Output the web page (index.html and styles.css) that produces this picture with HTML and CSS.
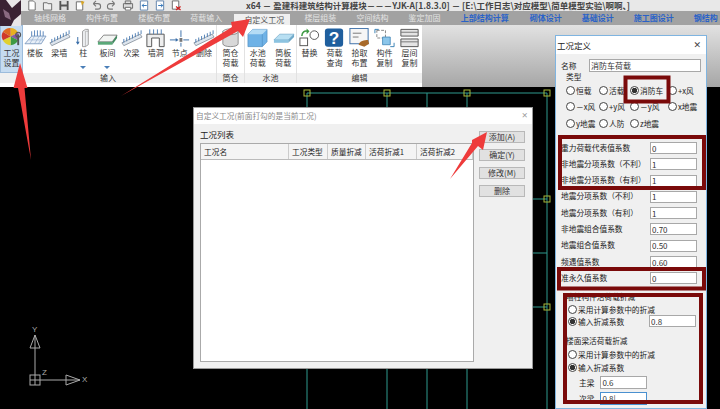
FILE: index.html
```html
<!DOCTYPE html>
<html lang="zh-CN">
<head>
    <meta charset="UTF-8">
    <title>工况定义</title>
    <link rel="stylesheet" href="styles.css">
</head>
<body>
<svg class="defs" width="0" height="0">
    <symbol id="pins" viewBox="0 0 24 20">
        <path d="M2 15 L21 6 L23 9 L4 18 Z" fill="#dfe6ee" stroke="#7d8894" stroke-width=".8"/>
        <path d="M4 11v4M7 9.5v4M10 8v4M13 6.5v4M16 5v4M19 3.500v4M22 2v4" stroke="#4f7fb5" stroke-width="1"/>
    </symbol>
</svg>

<div class="app">
    <svg class="logo" viewBox="0 0 21 26">
        <rect width="21" height="26" fill="#e9e6e8"/>
        <path d="M0 0h6l6 8 9-8v14l-7 6-3 6H0z" fill="#3a2233"/>
        <path d="M3 9l6 4 2 7-6-3z" fill="#8a6a80"/>
    </svg>

    <div class="titlebar">
        <div class="quick">
            <svg viewBox="0 0 12 12"><path d="M2.500 1h5l2 2v8h-7z" fill="#fff" stroke="#666"/></svg>
            <svg viewBox="0 0 12 12"><path d="M1 3h4l1 1h4v7H1z" fill="#eee" stroke="#666"/></svg>
            <svg viewBox="0 0 12 12"><path d="M1 1h10v10H1z" fill="#555"/><path d="M3 1h6v4H3zM3 7h6v4H3z" fill="#ddd"/></svg>
            <svg viewBox="0 0 12 12"><path d="M2 2h7v9H2z" fill="#fff" stroke="#666"/><path d="M7 1l4 1-3 4z" fill="#d9a520"/></svg>
            <svg viewBox="0 0 12 12"><path d="M3 4h5a3 3 0 0 1 0 6H5M3 4l3-3M3 4l3 3" fill="none" stroke="#777" stroke-width="1.200"/></svg>
            <svg viewBox="0 0 12 12"><path d="M9 4H4a3 3 0 0 0 0 6h3M9 4L6 1M9 4L6 7" fill="none" stroke="#777" stroke-width="1.200"/></svg>
            <svg viewBox="0 0 12 12"><path d="M3 1h6v3H3zM1 4h10v5H1z" fill="#ddd" stroke="#666"/><path d="M3 8h6v3H3z" fill="#fff" stroke="#666"/></svg>
            <svg viewBox="0 0 12 12"><path d="M2 1h8v10H2z" fill="#fff" stroke="#5b7fa8"/><path d="M9 6H4M6 4L4 6l2 2" fill="none" stroke="#2a6fb5"/></svg>
            <svg viewBox="0 0 12 12"><path d="M2 1h8v10H2z" fill="#fff" stroke="#5b7fa8"/><path d="M4 6h5M7 4l2 2-2 2" fill="none" stroke="#2a6fb5"/></svg>
            <svg viewBox="0 0 12 12"><path d="M2 1h7v9H2z" fill="#fff" stroke="#666"/><path d="M6 7l5 4M11 7l-5 4" stroke="#d02020" stroke-width="1.400"/></svg>
        </div>
        <div class="app-title">x64 － 盈建科建筑结构计算模块－－－YJK-A[1.8.3.0] － [E:\工作日志\对应模型\简单模型实验\啊啊、]</div>
    </div>

    <div class="tabs">
        <span class="tab">轴线网格</span>
        <span class="tab">构件布置</span>
        <span class="tab">楼板布置</span>
        <span class="tab">荷载输入</span>
        <span class="tab active">自定义工况</span>
        <span class="tab">楼层组装</span>
        <span class="tab">空间结构</span>
        <span class="tab">鉴定加固</span>
        <span class="tab calc tab-long">上部结构计算</span>
        <span class="tab calc">砌体设计</span>
        <span class="tab calc">基础设计</span>
        <span class="tab calc tab-mid">施工图设计</span>
        <span class="tab calc">钢结构</span>
    </div>

    <div class="ribbon">
        <div class="group group-input">
            <div class="items">
                <div class="item first">
                    <svg viewBox="0 0 22 22">
                        <path d="M10 10V1a9 9 0 0 1 8 5z" fill="#e8b020"/>
                        <path d="M10 10l8-4a9 9 0 0 1 0 8z" fill="#8a5aa8"/>
                        <path d="M10 10l8 4a9 9 0 0 1-8 5z" fill="#3f9a45"/>
                        <path d="M10 10v9a9 9 0 0 1-8-5z" fill="#e0d030"/>
                        <path d="M10 10l-8 4a9 9 0 0 1 0-9z" fill="#d03828"/>
                        <path d="M10 10L2 5a9 9 0 0 1 8-4z" fill="#e06820"/>
                        <path d="M18 8v11" stroke="#555" stroke-width="2"/>
                        <circle cx="18" cy="8" r="2.500" fill="none" stroke="#555" stroke-width="1.200"/>
                    </svg>
                    <span>工况<br>设置</span>
                </div>
                <div class="item">
                    <svg viewBox="0 0 24 20">
                        <path d="M1 16L8 8h15l-5 8z" fill="#e8eff7" stroke="#6d8fb8" stroke-width=".8"/>
                        <path d="M6 16l5-8M11 16l5-8M15 16l5-8M5 12h16" stroke="#8aa6c8" stroke-width=".6"/>
                        <path d="M8 8V3M11 8V2M14 8V2M17 8V2M20 8V3" stroke="#5a86bb"/>
                    </svg>
                    <span>楼板</span>
                </div>
                <div class="item"><svg viewBox="0 0 24 20"><use href="#pins"/></svg><span>梁墙</span></div>
                <div class="item">
                    <svg viewBox="0 0 24 20">
                        <path d="M11 3l3-2h3v16l-3 2h-3z" fill="#eef0f2" stroke="#888" stroke-width=".8"/>
                        <path d="M14 3h3M14 3v16" stroke="#999" stroke-width=".6"/>
                        <path d="M6 9v7" stroke="#3a6ea8"/><path d="M4 14h4l-2 3z" fill="#3a6ea8"/>
                    </svg>
                    <span>柱</span>
                    <i class="drop"></i>
                </div>
                <div class="item">
                    <svg viewBox="0 0 24 20">
                        <path d="M2 14l6-7h14l-5 7z" fill="#f3f5f3" stroke="#666" stroke-width=".8"/>
                        <path d="M2 14h15v3H2z" fill="#5aa878"/><path d="M17 14l5-7v3l-5 7z" fill="#3f8a5f"/>
                    </svg>
                    <span>板间</span>
                    <i class="drop"></i>
                </div>
                <div class="item"><svg viewBox="0 0 24 20"><use href="#pins"/></svg><span>次梁</span></div>
                <div class="item">
                    <svg viewBox="0 0 24 20">
                        <path d="M3 6h18v13h-5V10H8v9H3z" fill="#eee" stroke="#555"/>
                        <path d="M6 6V1M10 6V1M14 6V1M18 6V1" stroke="#4f7fb5"/>
                    </svg>
                    <span>墙洞</span>
                </div>
                <div class="item">
                    <svg viewBox="0 0 24 20">
                        <path d="M2 12h7" stroke="#3a6ea8"/><path d="M8 10l3 2-3 2z" fill="#3a6ea8"/>
                        <rect x="12" y="10" width="3" height="4" fill="#777"/>
                        <path d="M13.500 2v7M13.500 15v4M16 12h6" stroke="#3a6ea8"/>
                    </svg>
                    <span>节点</span>
                </div>
                <div class="item"><svg viewBox="0 0 24 20"><use href="#pins"/></svg><span>删除</span></div>
            </div>
            <div class="group-name">输入</div>
        </div>

        <div class="group group-silo">
            <div class="items">
                <div class="item">
                    <svg viewBox="0 0 24 20">
                        <path d="M4 3v13c0 4 16 4 16 0V3z" fill="#d8d8d8" stroke="#777" stroke-width=".8"/>
                        <ellipse cx="12" cy="3.500" rx="8" ry="3" fill="#f2f2f2" stroke="#777" stroke-width=".8"/>
                    </svg>
                    <span>筒仓<br>荷载</span>
                </div>
            </div>
            <div class="group-name">筒仓</div>
        </div>

        <div class="group group-tank">
            <div class="items">
                <div class="item">
                    <svg viewBox="0 0 24 20">
                        <path d="M2 6l5-5h15v13l-5 5H2z" fill="#6fb2e6" stroke="#4a88bb" stroke-width=".6"/>
                        <path d="M2 6l5-5h15l-5 5z" fill="#b5dcf5"/>
                        <path d="M17 6v13" stroke="#4a88bb" stroke-width=".6"/>
                    </svg>
                    <span>水池<br>荷载</span>
                </div>
                <div class="item">
                    <svg viewBox="0 0 24 20">
                        <path d="M2 12l6-6h15l-6 6z" fill="#b8dff2" stroke="#5c9cc0" stroke-width=".6"/>
                        <path d="M2 12h15v3H2z" fill="#8cc3e0"/><path d="M17 12l6-6v3l-6 6z" fill="#6ea8c8"/>
                    </svg>
                    <span>筒板<br>荷载</span>
                </div>
            </div>
            <div class="group-name">水池</div>
        </div>

        <div class="group group-edit">
            <div class="items">
                <div class="item">
                    <svg viewBox="0 0 24 20">
                        <rect x="2" y="10" width="8" height="8" fill="#fff" stroke="#555"/>
                        <circle cx="17" cy="7" r="4.500" fill="#fff" stroke="#555"/>
                        <path d="M4 8c0-4 3-6 6-5" fill="none" stroke="#3f9a45" stroke-width="1.600"/>
                        <path d="M9 0l3 3-3 3z" fill="#3f9a45"/>
                    </svg>
                    <span>替换</span>
                </div>
                <div class="item">
                    <svg viewBox="0 0 24 20">
                        <rect x="2" y="0" width="19" height="19" rx="3" fill="#1f5f9e"/>
                        <text x="11.500" y="16" class="help">?</text>
                    </svg>
                    <span>荷载<br>查询</span>
                </div>
                <div class="item">
                    <svg viewBox="0 0 24 20">
                        <rect x="2" y="0" width="19" height="16" fill="#f6f6f6" stroke="#3a6ea8"/>
                        <path d="M5 5h9M5 9h6" stroke="#777"/>
                        <path d="M11 17c1-4 6-5 10-5l1 4-5 3z" fill="#a86a2a"/>
                    </svg>
                    <span>拾取<br>布置</span>
                </div>
                <div class="item">
                    <svg viewBox="0 0 24 20">
                        <path d="M4 2h9v8H4z" fill="#fff" stroke="#666" stroke-width=".8" stroke-dasharray="3 1.500"/>
                        <path d="M10 9h8v8h-8z" fill="#8cc6ea" stroke="#3a82b5" stroke-width=".8"/>
                        <path d="M2 5V1h4M22 15v4h-4" fill="none" stroke="#3a82b5"/>
                    </svg>
                    <span>构件<br>复制</span>
                </div>
                <div class="item">
                    <svg viewBox="0 0 24 20">
                        <path d="M3 1h18v7H3zM3 11h18v8H3z" fill="#e4e4e4" stroke="#555"/>
                        <path d="M3 4h18M3 14h18" stroke="#777"/>
                    </svg>
                    <span>层间<br>复制</span>
                </div>
            </div>
            <div class="group-name">编辑</div>
        </div>

        <div class="ribbon-rest"></div>
    </div>

    <div class="canvas">
        <svg class="grid" viewBox="0 0 720 322">
            <path d="M307 6H547M307 6V30M387 6V30M427 6V30M467 6V30M307 282V322M387 282V322M427 282V322M467 282V322M547 6V322M532 112H547M532 166H547M532 220H547"/>
            <g class="node">
                <rect x="304" y="3" width="6" height="6"/>
                <rect x="384" y="3" width="6" height="6"/>
                <rect x="464" y="3" width="6" height="6"/>
                <rect x="544" y="3" width="6" height="6"/>
                <rect x="544" y="109" width="6" height="6"/>
                <rect x="544" y="217" width="6" height="6"/>
            </g>
        </svg>
        <svg class="axis" viewBox="0 0 100 70">
            <rect x="5" y="41" width="10" height="10"/>
            <path d="M5 46H15M10 41V51M10 41V14M15 46H41"/>
            <path d="M10 1L5 14H15ZM10 1V14"/>
            <path d="M55 46L41 41V51ZM41 46H55"/>
            <text x="7" y="-2">Y</text>
            <text x="17" y="41">Z</text>
            <text x="57" y="48">X</text>
        </svg>
    </div>

    <div class="window cases">
        <div class="window-title">
            <span>自定义工况(前面打勾的是当前工况)</span>
            <span class="close">✕</span>
        </div>
        <div class="cases-body">
            <div class="cases-main">
                <div class="list-name">工况列表</div>
                <div class="list">
                    <div class="list-head">
                        <span class="col-name">工况名</span>
                        <span class="col-type">工况类型</span>
                        <span class="col-mass">质量折减</span>
                        <span class="col-live">活荷折减1</span>
                        <span class="col-live2">活荷折减2</span>
                    </div>
                </div>
            </div>
            <div class="cases-buttons">
                <button>添加(A)</button>
                <button>确定(Y)</button>
                <button>修改(M)</button>
                <button>删除</button>
            </div>
        </div>
    </div>

    <div class="window define">
        <div class="window-title">
            <span>工况定义</span>
            <span class="close">✕</span>
        </div>
        <div class="define-body">
            <div class="name-row">
                <label>名称</label>
                <input type="text" value="消防车荷载">
            </div>
            <div class="type-label">类型</div>
            <div class="types">
                <label><input type="radio" name="type">恒载</label>
                <label><input type="radio" name="type">活载</label>
                <label><input type="radio" name="type" checked>消防车</label>
                <label><input type="radio" name="type">+x风</label>
                <label><input type="radio" name="type">－x风</label>
                <label><input type="radio" name="type">+y风</label>
                <label><input type="radio" name="type">－y风</label>
                <label><input type="radio" name="type">x地震</label>
                <label><input type="radio" name="type">y地震</label>
                <label><input type="radio" name="type">人防</label>
                <label><input type="radio" name="type">z地震</label>
            </div>
            <div class="factors">
                <div class="factor"><label>重力荷载代表值系数</label><input type="text" value="0"></div>
                <div class="factor"><label>非地震分项系数（不利）</label><input type="text" value="1"></div>
                <div class="factor"><label>非地震分项系数（有利）</label><input type="text" value="1"></div>
                <div class="factor"><label>地震分项系数（不利）</label><input type="text" value="1"></div>
                <div class="factor"><label>地震分项系数（有利）</label><input type="text" value="1"></div>
                <div class="factor"><label>非地震组合值系数</label><input type="text" value="0.70"></div>
                <div class="factor"><label>地震组合值系数</label><input type="text" value="0.50"></div>
                <div class="factor"><label>频遇值系数</label><input type="text" value="0.60"></div>
                <div class="factor"><label>准永久值系数</label><input type="text" value="0"></div>
            </div>
            <div class="reduce">
                <div class="reduce-name">墙柱构件活荷载折减</div>
                <label class="pick"><input type="radio" name="wall">采用计算参数中的折减</label>
                <label class="pick"><input type="radio" name="wall" checked>输入折减系数<input type="text" class="reduce-value" value="0.8"></label>
            </div>
            <div class="reduce beam">
                <div class="reduce-name">楼面梁活荷载折减</div>
                <label class="pick"><input type="radio" name="beam">采用计算参数中的折减</label>
                <label class="pick"><input type="radio" name="beam" checked>输入折减系数</label>
                <div class="beam-row"><label>主梁</label><input type="text" value="0.6"></div>
                <div class="beam-row"><label>次梁</label><input type="text" class="focused" value="0.8|"></div>
            </div>
        </div>
    </div>

    <svg class="notes" viewBox="0 0 720 409">
        <rect class="mark" x="625.500" y="77.500" width="43" height="24"/>
        <rect class="mark" x="560" y="137" width="144" height="51"/>
        <rect class="mark" x="559" y="269" width="145" height="19.500"/>
        <rect class="mark" x="565" y="295" width="136" height="107"/>
        <path class="arrow" d="M20 63L27.500 88H24.500L31 160L18 88H13.500Z"/>
        <path class="arrow" d="M250 19L243 37L238 31L121 96L232 27L231 22Z"/>
        <path class="arrow" d="M487 132L483 150L478 146L450 179L472 143L472 140Z"/>
    </svg>
</div>
</body>
</html>
```

FILE: styles.css
```css
* {
    box-sizing: border-box;
}
html, body {
    margin: 0;
    padding: 0;
    background-color: #000;
}
body {
    font-family: "Noto Sans CJK SC", "Liberation Sans", sans-serif;
    font-size: 8px;
    color: #222;
}
.defs {
    display: block;
}
.app {
    position: relative;
    display: flex;
    flex-direction: column;
    width: 720px;
    height: 409px;
    overflow: hidden;
    background-color: #000;
}
.logo {
    position: absolute;
    left: 0;
    top: 0;
    width: 21px;
    height: 26px;
}

/* title bar */
.titlebar {
    display: flex;
    align-items: center;
    height: 11px;
    padding-left: 26px;
    background-color: #e8e8e8;
}
.quick {
    display: flex;
    gap: 4px;
    width: 220px;
}
.quick svg {
    width: 12px;
    height: 11px;
}
.app-title {
    font-size: 8.5px;
    font-weight: 700;
    line-height: 11px;
    color: #444;
    white-space: nowrap;
}

/* tabs */
.tabs {
    display: flex;
    align-items: flex-end;
    height: 14px;
    padding-left: 34px;
    background-color: #a2a2a2;
}
.tab {
    flex: none;
    width: 52.100px;
    height: 14px;
    font-size: 8px;
    line-height: 14px;
    color: #e4e4e4;
    white-space: nowrap;
}
.tab.active {
    width: 56px;
    height: 11px;
    margin-left: -8px;
    padding-left: 10px;
    line-height: 11px;
    color: #555;
    background-color: #efefef;
}
.tab.active + .tab {
    margin-left: 14px;
}
.tab.calc {
    font-weight: 700;
    color: #2a62c8;
}
.tab.tab-long {
    width: 69px;
}
.tab.tab-mid {
    width: 60px;
}

/* ribbon */
.ribbon {
    display: flex;
    height: 62px;
    background-color: #fff;
}
.group {
    display: flex;
    flex-direction: column;
    height: 58px;
    border-right: 1px solid #e2e2e2;
}
.group-input {
    width: 217px;
}
.group-silo {
    width: 28px;
}
.group-tank {
    width: 52px;
}
.group-edit {
    width: 125px;
    border-right: 0;
}
.items {
    display: flex;
    flex: 1;
}
.item {
    display: flex;
    flex-direction: column;
    align-items: center;
    flex: 1;
    padding-top: 3px;
    font-size: 8px;
    line-height: 9.500px;
    text-align: center;
    color: #333;
}
.item svg {
    width: 23px;
    height: 20px;
    flex: none;
}
.item.first {
    flex: 0 0 22px;
    padding-top: 1px;
    background-color: #c6dcf1;
    border: 1px solid #9cbcdc;
}
.item.first svg {
    width: 21px;
    height: 21px;
}
.help {
    font-family: "Liberation Sans", sans-serif;
    font-size: 18px;
    font-weight: 700;
    text-anchor: middle;
    fill: #fff;
}
.drop {
    margin-top: 8px;
    border-top: 3px solid #4a7fb8;
    border-left: 3.500px solid transparent;
    border-right: 3.500px solid transparent;
}
.group-name {
    height: 10px;
    font-size: 8px;
    line-height: 10px;
    text-align: center;
    color: #333;
    background-color: #f0f0f0;
}
.ribbon-rest {
    flex: 1;
    background: linear-gradient(#e2e2e2, #a6a6a6);
}

/* drawing area */
.canvas {
    position: relative;
    flex: 1;
    background-color: #000;
}
.grid {
    position: absolute;
    left: 0;
    top: 0;
    width: 720px;
    height: 322px;
}
.grid path {
    fill: none;
    stroke: #2f9a8e;
}
.grid .node rect {
    fill: none;
    stroke: #a8b83a;
}
.axis {
    position: absolute;
    left: 25px;
    top: 247px;
    width: 100px;
    height: 70px;
    overflow: visible;
}
.axis rect, .axis path {
    fill: none;
    stroke: #aaa;
}
.axis text {
    font-family: "Liberation Sans", sans-serif;
    font-size: 8px;
    fill: #aaa;
}

/* floating windows */
.window {
    position: absolute;
    background-color: #f0f0f0;
}
.window-title {
    display: flex;
    justify-content: space-between;
    background-color: #fff;
}
.close {
    font-family: "DejaVu Sans", sans-serif;
}
.window input[type="text"] {
    margin: 0;
    padding: 0 1px;
    font-family: inherit;
    font-size: 8px;
    color: #333;
    background-color: #fff;
    border: 1px solid #a8a8a8;
    border-radius: 0;
    outline: none;
}
.window input[type="radio"] {
    appearance: none;
    flex: none;
    width: 9px;
    height: 9px;
    margin: 0 1px 0 0;
    background-color: #fff;
    border: 1px solid #444;
    border-radius: 50%;
}
.window input[type="radio"]:checked {
    background: radial-gradient(circle, #333 0 2.500px, #fff 3px);
}

.cases {
    left: 193px;
    top: 107px;
    width: 340px;
    height: 262px;
    border: 1px solid #999;
}
.cases .window-title {
    height: 16px;
    padding: 0 4px 0 2px;
    font-size: 7.700px;
    line-height: 15px;
    color: #888;
}
.cases .close {
    color: #999;
}
.cases-body {
    display: flex;
    gap: 5px;
    padding: 2px 7px 6px 6px;
    height: 244px;
}
.cases-main {
    display: flex;
    flex-direction: column;
    flex: 1;
}
.list-name {
    height: 17px;
    font-size: 8.500px;
    line-height: 16px;
}
.list {
    flex: 1;
    background-color: #fff;
    border: 1px solid #aaa;
}
.list-head {
    display: flex;
    height: 16px;
    font-size: 7.700px;
    line-height: 15px;
    background-color: #f4f4f4;
    border-bottom: 1px solid #bbb;
}
.list-head span {
    padding-left: 3px;
    border-right: 1px solid #ccc;
    white-space: nowrap;
}
.col-name {
    width: 88px;
}
.col-type {
    width: 39px;
}
.col-mass {
    width: 38px;
}
.col-live {
    width: 51px;
}
.col-live2 {
    flex: 1;
}
.cases-buttons {
    display: flex;
    flex-direction: column;
    gap: 6px;
    width: 46px;
    padding-top: 5px;
}
.cases-buttons button {
    height: 12px;
    padding: 0;
    font-family: inherit;
    font-size: 8px;
    line-height: 10px;
    color: #333;
    background-color: #e1e1e1;
    border: 1px solid #b8b8b8;
}

.define {
    left: 555px;
    top: 35px;
    width: 152px;
    height: 374px;
    border: 1px solid #7fb4e0;
}
.define .window-title {
    align-items: center;
    height: 18px;
    padding: 0 5px 0 1px;
    font-size: 8.500px;
}
.define .close {
    font-size: 9px;
    color: #444;
}
.define-body {
    padding: 5px 5px 0 5px;
    font-size: 7.700px;
}
.name-row {
    display: flex;
    align-items: center;
    justify-content: space-between;
}
.name-row input {
    width: 112px;
    height: 13px;
}
.type-label {
    height: 10px;
    margin-left: 5px;
    line-height: 10px;
}
.types {
    display: grid;
    grid-template-columns: 33px 31px 38px 40px;
    grid-auto-rows: 16.500px;
    margin-left: 5px;
}
.types label {
    display: flex;
    align-items: center;
    white-space: nowrap;
}
.factors {
    display: flex;
    flex-direction: column;
    gap: 4.300px;
    margin-top: 10.500px;
}
.factor {
    display: flex;
    align-items: center;
    justify-content: space-between;
    height: 12px;
    padding-right: 4px;
}
.factor label {
    margin-bottom: 2px;
    white-space: nowrap;
}
.factor input {
    width: 47px;
    height: 12px;
}
.reduce {
    margin-top: 7px;
    padding-left: 7px;
}
.reduce.beam {
    margin-top: 8px;
}
.reduce-name {
    height: 12px;
    margin-left: -2px;
    line-height: 12px;
    white-space: nowrap;
}
.pick {
    display: flex;
    align-items: center;
    height: 12px;
    white-space: nowrap;
}
.beam .pick {
    height: 13.500px;
}
.window input.reduce-value {
    width: 47px;
    height: 12px;
    margin-left: auto;
    margin-right: 5px;
}
.beam-row {
    display: flex;
    align-items: center;
    gap: 6px;
    height: 16px;
    padding-left: 11px;
}
.beam-row input {
    width: 47px;
    height: 13px;
}
.window input.focused {
    border-color: #4a90d0;
}

/* hand drawn notes on top of the shot */
.notes {
    position: absolute;
    left: 0;
    top: 0;
    width: 720px;
    height: 409px;
}
.mark {
    fill: none;
    stroke: #7a0a0a;
    stroke-width: 4;
}
.arrow {
    fill: #ee3b3b;
}
```
